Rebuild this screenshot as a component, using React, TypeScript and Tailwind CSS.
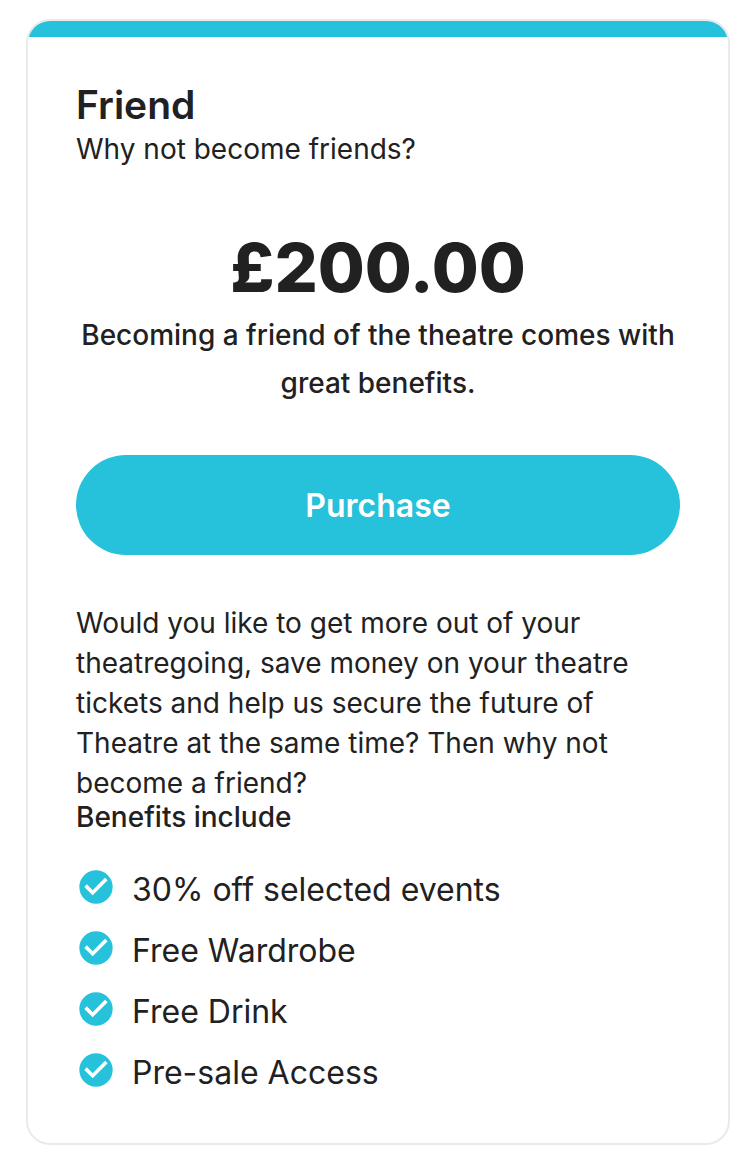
import React from 'react';

const benefits = ['30% off selected events', 'Free Wardrobe', 'Free Drink', 'Pre-sale Access'];

function CheckIcon(): React.ReactElement {
  return (
    <svg viewBox="0 0 24 24" aria-hidden="true" className="h-10 w-10 shrink-0">
      <circle cx="12" cy="12" r="10" fill="#26c1da" />
      <path d="M10 17l-5-5 1.5-1.6 3.5 3.5 7.4-7.4L19 8z" fill="#fff" />
    </svg>
  );
}

function App(): React.ReactElement {
  return (
    <main className="bg-white px-[26px] py-[19px] font-['Inter',sans-serif] text-[#212121]">
      <article className="overflow-hidden rounded-3xl border-2 border-[#eaeaea]">
        <div className="h-4 bg-[#26c1da]" />

        <div className="px-12 pt-12 pb-8">
          <h2 className="text-[39px] leading-10 font-semibold">Friend</h2>
          <p className="text-[28px] leading-[48px]">Why not become friends?</p>

          <div className="pt-[54px] text-center">
            <p className="text-[68px] leading-[80px] font-extrabold">£200.00</p>
            <p className="mt-1 text-[28px] leading-[48px] font-medium">
              Becoming a friend of the theatre comes with great benefits.
            </p>
          </div>

          <button
            type="button"
            className="mt-12 h-[100px] w-full rounded-full bg-[#26c1da] pt-0.5 text-[32px] font-semibold text-white"
          >
            Purchase
          </button>

          <p className="mt-12 text-[28px] leading-10">
            Would you like to get more out of your theatregoing, save money on your theatre tickets
            and help us secure the future of Theatre at the same time? Then why not become a friend?
          </p>

          <h3 className="text-[28px] leading-7 font-medium">Benefits include</h3>

          <ul className="mt-9 text-[32px]">
            {benefits.map((benefit) => (
              <li key={benefit} className="flex h-[61px] items-start gap-4">
                <CheckIcon />
                <span className="leading-[46px]">{benefit}</span>
              </li>
            ))}
          </ul>
        </div>
      </article>
    </main>
  );
}

export default App;
